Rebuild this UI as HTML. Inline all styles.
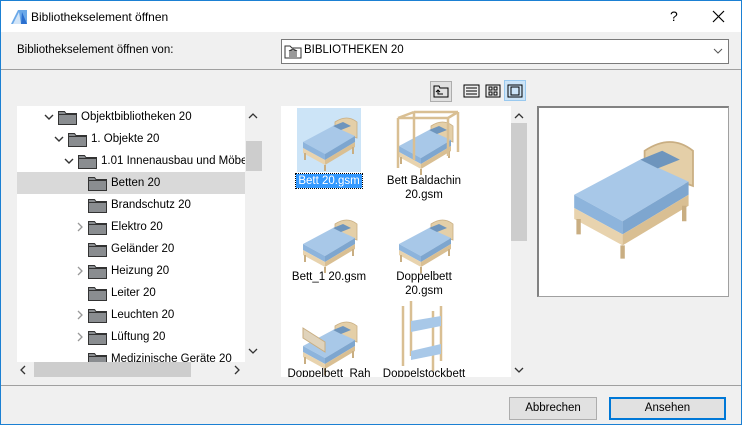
<!DOCTYPE html>
<html><head><meta charset="utf-8"><style>
*{margin:0;padding:0;box-sizing:border-box}
body{width:742px;height:425px;overflow:hidden;font-family:"Liberation Sans",sans-serif;font-size:11.5px;color:#000;background:#f0f0f0}
.win{position:absolute;left:0;top:0;width:742px;height:425px;border:1px solid #1b80d3;background:#f0f0f0}
.abs{position:absolute}
.row{position:absolute;height:22px;line-height:22px;white-space:nowrap}
.fold{position:absolute;top:4px}
.chev{position:absolute;top:0}
.lbl{position:absolute;text-align:center;width:110px;line-height:14px}
</style></head><body>
<div class="win">
<div class="abs" style="left:0;top:0;width:740px;height:31px;background:#fff"></div>
<svg class="abs" style="left:9px;top:7px" width="18" height="18"><path d="M1 16 L8 2 L17 2 L17 16 Z" fill="#6aa8e8"/><path d="M3 16 L9 4 L11 16Z" fill="#fff" opacity=".7"/><path d="M11 16 L12 4 L17 16Z" fill="#2a6fcf"/></svg>
<div class="abs" style="left:30px;top:9px;font-size:12px">Bibliothekselement öffnen</div>
<div class="abs" style="left:669px;top:7px;font-size:14px">?</div>
<svg class="abs" style="left:711px;top:9px" width="13" height="13"><path d="M1 1L12 12M12 1L1 12" stroke="#000" stroke-width="1.2"/></svg>

<div class="abs" style="left:16px;top:43px">Bibliothekselement öffnen von:</div>
<div class="abs" style="left:280px;top:38px;width:448px;height:25px;background:#fff;border:1px solid #7a7a7a"></div>
<svg class="abs" style="left:283px;top:42px" width="18" height="16"><path d="M1 3h5l2 2h9v10H1z" fill="#fff" stroke="#333"/><path d="M5 8l4-2 4 2zM5 13h8M6 9v3M8 9v3M10 9v3M12 9v3" stroke="#333" fill="none"/></svg>
<div class="abs" style="left:303px;top:43px">BIBLIOTHEKEN 20</div>
<svg class="abs" style="left:712px;top:47px" width="10" height="6"><path d="M1 1l4 4 4-4" stroke="#555" fill="none"/></svg>
<div class="abs" style="left:0;top:68px;width:740px;height:1px;background:#a0a0a0"></div>

<div class="abs" style="left:429px;top:80px;width:22px;height:21px;background:#e0e0e0;border:1px solid #adadad"></div>
<svg class="abs" style="left:432px;top:83px" width="16" height="15"><path d="M1 2h5l1 2h8v9H1z" fill="none" stroke="#000"/><path d="M5 6v4h5M3 8l2-2 2 2" stroke="#000" fill="none"/></svg>
<svg class="abs" style="left:462px;top:82px" width="17" height="16"><rect x="1" y="2" width="15" height="12" fill="none" stroke="#000"/><path d="M3 5h11M3 8h11M3 11h11" stroke="#000"/></svg>
<svg class="abs" style="left:484px;top:82px" width="17" height="16"><rect x="1" y="2" width="14" height="12" fill="none" stroke="#000"/><rect x="4" y="4" width="3" height="3" fill="none" stroke="#000"/><rect x="9" y="4" width="3" height="3" fill="none" stroke="#000"/><rect x="4" y="9" width="3" height="3" fill="none" stroke="#000"/><rect x="9" y="9" width="3" height="3" fill="none" stroke="#000"/></svg>
<div class="abs" style="left:503px;top:79px;width:22px;height:21px;background:#cce4f7;border:1px solid #99c9ef"></div>
<svg class="abs" style="left:506px;top:82px" width="16" height="16"><rect x="1" y="2" width="14" height="12" fill="none" stroke="#000"/><rect x="4" y="4" width="8" height="8" fill="none" stroke="#000"/></svg>

<div class="abs" style="left:16px;top:105px;width:228px;height:256px;background:#fff;overflow:hidden">
<div class="row" style="left:0;top:66px;width:228px;background:#d9d9d9"></div>
<div id="tree"></div>
</div>
<svg class="abs" style="left:247px;top:111px" width="10" height="7"><path d="M1 6l4-4 4 4" stroke="#333" fill="none" stroke-width="1.3"/></svg>
<div class="abs" style="left:245px;top:140px;width:16px;height:30px;background:#cdcdcd"></div>
<svg class="abs" style="left:247px;top:347px" width="10" height="7"><path d="M1 1l4 4 4-4" stroke="#333" fill="none" stroke-width="1.3"/></svg>
<svg class="abs" style="left:19px;top:364px" width="7" height="10"><path d="M5 1L1 5l4 4" stroke="#333" fill="none" stroke-width="1.3"/></svg>
<div class="abs" style="left:33px;top:361px;width:157px;height:15px;background:#cdcdcd"></div>
<svg class="abs" style="left:233px;top:364px" width="7" height="10"><path d="M1 1l4 4-4 4" stroke="#333" fill="none" stroke-width="1.3"/></svg>

<div class="abs" style="left:280px;top:105px;width:230px;height:271px;background:#fff;overflow:hidden">
<svg width="230" height="271">
<defs>
<g id="bed">
<path d="M38 14 Q50 6 60 14 L60 30 L38 22Z" fill="#e4cfa8" stroke="#c9ae82" stroke-width=".8"/>
<path d="M6 34 L36 18 L58 28 L28 46Z" fill="#a8c8e8"/>
<path d="M6 34 L28 46 L28 52 L6 40Z" fill="#8db4dc"/>
<path d="M28 46 L58 28 L58 34 L28 52Z" fill="#7ea6cf"/>
<path d="M6 40 L28 52 L28 57 L6 45Z" fill="#e8d3ae"/>
<path d="M28 52 L58 34 L58 39 L28 57Z" fill="#d9bf93"/>
<path d="M36 18 L46 14 L54 18 L44 22Z" fill="#6e95bd"/>
<path d="M8 45v7M28 57v6M56 39v7" stroke="#c9ae82" stroke-width="2"/>
</g>
</defs>
<rect x="16" y="2" width="64" height="64" fill="#cce4f7"/>
<use href="#bed" x="16" y="2"/>
<use href="#bed" x="112" y="6"/>
<path d="M117 12v50M167 12v38M133 6v48M177 6v40M117 12h50M133 6h44M117 12l16-6M167 12l10-6" stroke="#d9bf93" stroke-width="2.5" fill="none"/>
<use href="#bed" x="16" y="104"/>
<use href="#bed" x="112" y="104"/>
<use href="#bed" x="16" y="206"/>
<path d="M22 222 L44 236 L44 246 L22 232Z" fill="#e0d3bb" stroke="#c9ae82"/>
<path d="M122 200v60M130 195v55M152 205v60M160 200v55" stroke="#d9bf93" stroke-width="2.5"/>
<path d="M130 215 L160 210 L160 220 L130 226Z" fill="#a8c8e8"/>
<path d="M130 245 L160 238 L160 248 L130 254Z" fill="#a8c8e8"/>
</svg>
<div class="abs" style="left:15px;top:68px;width:66px;height:14px;background:#3399ff;outline:1px dotted #000"></div>
<div class="lbl" style="left:-7px;top:68px;color:#fff">Bett 20.gsm</div>
<div class="lbl" style="left:88px;top:68px">Bett Baldachin<br>20.gsm</div>
<div class="lbl" style="left:-7px;top:164px">Bett_1 20.gsm</div>
<div class="lbl" style="left:88px;top:164px">Doppelbett<br>20.gsm</div>
<div class="lbl" style="left:-7px;top:261px">Doppelbett_Rah</div>
<div class="lbl" style="left:88px;top:261px">Doppelstockbett</div>
</div>
<svg class="abs" style="left:513px;top:111px" width="10" height="7"><path d="M1 6l4-4 4 4" stroke="#333" fill="none" stroke-width="1.3"/></svg>
<div class="abs" style="left:510px;top:122px;width:16px;height:118px;background:#cdcdcd"></div>
<svg class="abs" style="left:513px;top:366px" width="10" height="7"><path d="M1 1l4 4 4-4" stroke="#333" fill="none" stroke-width="1.3"/></svg>

<div class="abs" style="left:536px;top:105px;width:192px;height:191px;background:#fff;border:1px solid #a0a0a0;border-top:2px solid #828282;border-left:2px solid #828282">
<svg width="190" height="188" style="position:absolute;left:0;top:0"><use href="#bed" transform="translate(22,12) scale(2.2)"/></svg>
</div>

<div class="abs" style="left:0;top:384px;width:740px;height:1px;background:#a0a0a0"></div>
<div class="abs" style="left:508px;top:396px;width:88px;height:23px;background:#e1e1e1;border:1px solid #adadad;text-align:center;line-height:21px">Abbrechen</div>
<div class="abs" style="left:608px;top:396px;width:117px;height:23px;background:#e1e1e1;border:2px solid #0078d7;text-align:center;line-height:19px">Ansehen</div>
</div>
<script>
var rows=[[1,"Objektbibliotheken 20","v"],[2,"1. Objekte 20","v"],[3,"1.01 Innenausbau und Möbel 20","v"],[4,"Betten 20",""],[4,"Brandschutz 20",""],[4,"Elektro 20",">"],[4,"Geländer 20",""],[4,"Heizung 20",">"],[4,"Leiter 20",""],[4,"Leuchten 20",">"],[4,"Lüftung 20",">"],[4,"Medizinische Geräte 20",""]];
var h="";rows.forEach(function(r,i){var o=(r[0]-1)*10;var y=i*22;
var ch=r[2]=="v"?'<svg class="chev" style="left:'+(27+o)+'px;top:8px" width="10" height="7"><path d="M1 1l4 4 4-4" stroke="#333" fill="none" stroke-width="1.4"/></svg>':r[2]==">"?'<svg class="chev" style="left:'+(30+o)+'px;top:6px" width="7" height="10"><path d="M1 1l4 4-4 4" stroke="#999" fill="none" stroke-width="1.3"/></svg>':"";
h+='<div class="row" style="left:0;top:'+y+'px;width:400px">'+ch+'<svg class="fold" style="left:'+(41+o)+'px" width="19" height="15"><path d="M.5 1.5h6l1.5 2h10.5v11H.5z" fill="#8a8d90" stroke="#333"/><path d="M.5 4.5h18" stroke="#333"/></svg><span style="position:absolute;left:'+(64+o)+'px">'+r[1]+'</span></div>';});
document.getElementById("tree").innerHTML=h;
</script>
</body></html>
